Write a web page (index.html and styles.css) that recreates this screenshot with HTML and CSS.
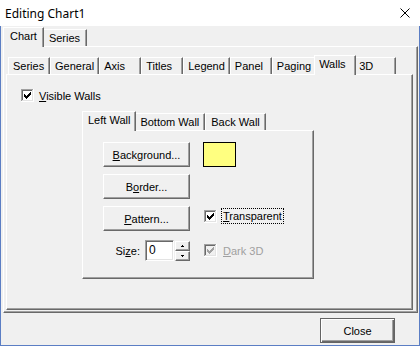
FILE: index.html
```html
<!DOCTYPE html>
<html lang="en">
<head>
    <meta charset="UTF-8">
    <title>Editing Chart1</title>
    <link rel="stylesheet" href="styles.css">
</head>
<body>
<div class="window">
    <div class="titlebar">
        <span class="title">Editing Chart1</span>
        <svg class="close-x" width="10" height="10" viewBox="0 0 10 10"><path d="M0.5 0.5L9.5 9.5M9.5 0.5L0.5 9.5" stroke="#000" stroke-width="1" fill="none"/></svg>
    </div>
    <div class="client">
        <div class="tabs outer">
            <div class="tab active">Chart</div>
            <div class="tab">Series</div>
        </div>
        <div class="page outer-page">
            <div class="tabs small">
                <div class="tab">Series</div>
                <div class="tab">General</div>
                <div class="tab">Axis</div>
                <div class="tab">Titles</div>
                <div class="tab">Legend</div>
                <div class="tab">Panel</div>
                <div class="tab">Paging</div>
                <div class="tab active">Walls</div>
                <div class="tab">3D</div>
            </div>
            <div class="page inner-page">
                <label class="check">
                    <svg class="cb" width="13" height="13" viewBox="0 0 13 13">
                        <path d="M0 0h12v1H1v11H0z" fill="#a0a0a0"/>
                        <path d="M1 1h10v1H2v9H1z" fill="#696969"/>
                        <path d="M12 0h1v13H0v-1h12z" fill="#fff"/>
                        <path d="M11 1h1v11H1v-1h10z" fill="#e3e3e3"/>
                        <rect x="2" y="2" width="9" height="9" fill="#fff"/>
                        <path d="M3 5h1v3H3zM4 6h1v3H4zM5 7h1v3H5zM6 6h1v3H6zM7 5h1v3H7zM8 4h1v3H8zM9 3h1v3H9z" fill="#000"/>
                    </svg>
                    <span class="check-text"><u>V</u>isible Walls</span>
                </label>

                <div class="walls">
                    <div class="tabs wall">
                        <div class="tab active">Left Wall</div>
                        <div class="tab">Bottom Wall</div>
                        <div class="tab">Back Wall</div>
                    </div>
                    <div class="page wall-page">
                        <div class="wall-grid">
                            <button class="btn"><u>B</u>ackground...</button>
                            <div class="swatch"></div>

                            <button class="btn">B<u>o</u>rder...</button>
                            <div></div>

                            <button class="btn"><u>P</u>attern...</button>
                            <label class="check transparent">
                                <svg class="cb" width="13" height="13" viewBox="0 0 13 13">
                                    <path d="M0 0h12v1H1v11H0z" fill="#a0a0a0"/>
                                    <path d="M1 1h10v1H2v9H1z" fill="#696969"/>
                                    <path d="M12 0h1v13H0v-1h12z" fill="#fff"/>
                                    <path d="M11 1h1v11H1v-1h10z" fill="#e3e3e3"/>
                                    <rect x="2" y="2" width="9" height="9" fill="#fff"/>
                                    <path d="M3 5h1v3H3zM4 6h1v3H4zM5 7h1v3H5zM6 6h1v3H6zM7 5h1v3H7zM8 4h1v3H8zM9 3h1v3H9z" fill="#000"/>
                                </svg>
                                <span class="focus"><u>T</u>ransparent</span>
                            </label>

                            <div class="size-row">
                                <span class="size-label">Si<u>z</u>e:</span>
                                <div class="edit">0</div>
                                <div class="spin">
                                    <div class="spin-btn"><svg width="3" height="2" viewBox="0 0 3 2"><path d="M1 0h1v1H1zM0 1h3v1H0z" fill="#000"/></svg></div>
                                    <div class="spin-btn"><svg width="3" height="2" viewBox="0 0 3 2"><path d="M0 0h3v1H0zM1 1h1v1H1z" fill="#000"/></svg></div>
                                </div>
                            </div>
                            <label class="check disabled">
                                <svg class="cb" width="13" height="13" viewBox="0 0 13 13">
                                    <path d="M0 0h12v1H1v11H0z" fill="#a0a0a0"/>
                                    <path d="M1 1h10v1H2v9H1z" fill="#696969"/>
                                    <path d="M12 0h1v13H0v-1h12z" fill="#fff"/>
                                    <path d="M11 1h1v11H1v-1h10z" fill="#e3e3e3"/>
                                    <rect x="2" y="2" width="9" height="9" fill="#f0f0f0"/>
                                    <path d="M3 5h1v3H3zM4 6h1v3H4zM5 7h1v3H5zM6 6h1v3H6zM7 5h1v3H7zM8 4h1v3H8zM9 3h1v3H9z" fill="#a0a0a0"/>
                                </svg>
                                <span class="check-text"><u>D</u>ark 3D</span>
                            </label>
                        </div>
                    </div>
                </div>
            </div>
        </div>
        <div class="footer">
            <button class="btn default">Close</button>
        </div>
    </div>
</div>
</body>
</html>
```

FILE: styles.css
```css
* {
    box-sizing: border-box;
}
body {
    margin: 0;
    font-family: "Liberation Sans", Arial, sans-serif;
    font-size: 11px;
    color: #000;
    background: #f0f0f0;
}
.window {
    width: 420px;
    height: 346px;
    display: flex;
    flex-direction: column;
    background: #f0f0f0;
}
.titlebar {
    height: 26px;
    flex: none;
    background: #fff;
    display: flex;
    align-items: center;
    justify-content: space-between;
    padding: 0 10px 0 5px;
    font-family: "Segoe UI", "Noto Sans", sans-serif;
    font-size: 12px;
}
.client {
    flex: 1;
    display: flex;
    flex-direction: column;
    border: 1px solid #5b7ec4;
    border-top: none;
    padding: 1px 1px 0 2px;
}

/* tab strips */
.tabs {
    display: flex;
    align-items: flex-end;
    height: 19px;
    padding-left: 2px;
    position: relative;
    z-index: 1;
    flex: none;
}
.tab {
    height: 17px;
    line-height: 16px;
    padding: 0 4px;
    border-top: 1px solid #fff;
    border-left: 1px solid #fff;
    border-right: 1px solid #696969;
    box-shadow: inset -1px 0 #a0a0a0;
    background: #f0f0f0;
    white-space: nowrap;
}
.tabs.outer .tab {
    padding: 0 6px;
}
.tabs.wall .tab {
    padding: 0 5px;
}
.tabs.small .tab {
    min-width: 42px;
}
.tab.active {
    height: 20px;
    padding-bottom: 3px;
    margin: 0 -2px -1px;
    position: relative;
    z-index: 1;
}

/* pages */
.page {
    border: 1px solid;
    border-color: #fff #696969 #696969 #fff;
    box-shadow: inset -1px -1px #a0a0a0;
}
.outer-page {
    height: 267px;
    flex: none;
    display: flex;
    flex-direction: column;
    padding: 8px 4px 2px 2px;
}
.inner-page {
    flex: 1;
    padding: 14px 0 0 14px;
}
.walls {
    width: 232px;
    margin: 9px 0 0 61px;
}
.wall-page {
    height: 149px;
    padding: 11px 0 0 20px;
}

/* checkboxes */
.check {
    display: flex;
    align-items: center;
    height: 13px;
}
.cb {
    display: block;
    flex: none;
}
.check-text {
    margin-left: 5px;
    white-space: nowrap;
}
.check.transparent {
    height: 16px;
    align-self: start;
    margin: 2px 0 0 1px;
}
.focus {
    margin-left: 4px;
    border: 1px dotted #000;
    padding: 0 1px;
    line-height: 14px;
    white-space: nowrap;
}
.check.disabled {
    margin-left: 1px;
    align-self: center;
    color: #a0a0a0;
}
.check.disabled .check-text {
    margin-left: 6px;
}

/* wall grid */
.wall-grid {
    display: grid;
    grid-template-columns: 87px auto;
    grid-template-rows: 25px 25px 25px 25px;
    column-gap: 13px;
    row-gap: 7px;
}
.btn {
    font: inherit;
    color: #000;
    background: #f0f0f0;
    border: 1px solid;
    border-color: #fff #696969 #696969 #fff;
    box-shadow: inset -1px -1px #a0a0a0;
    padding: 0;
    margin: 0;
    height: 25px;
    width: 87px;
}
.swatch {
    width: 33px;
    height: 25px;
    border: 1px solid #000;
    background: #ffff80;
}
.size-row {
    display: flex;
    justify-content: flex-end;
    align-items: center;
}
.size-label {
    margin-right: 5px;
}
.edit {
    width: 29px;
    height: 21px;
    background: #fff;
    border: 1px solid;
    border-color: #a0a0a0 #fff #fff #a0a0a0;
    box-shadow: inset 1px 1px #696969, inset -1px -1px #e3e3e3;
    font-size: 12px;
    line-height: 19px;
    padding-left: 3px;
    margin-right: 1px;
}
.spin {
    display: flex;
    flex-direction: column;
    width: 15px;
    height: 20px;
}
.spin-btn {
    height: 10px;
    display: flex;
    align-items: center;
    justify-content: center;
    border: 1px solid;
    border-color: #fff #696969 #696969 #fff;
    box-shadow: inset -1px -1px #a0a0a0;
}
.spin-btn svg {
    display: block;
}

/* bottom bar */
.footer {
    flex: 1;
    display: flex;
    justify-content: flex-end;
    padding: 5px 23px 0 0;
}
.btn.default {
    width: 75px;
    border: 1px solid #646464;
    box-shadow: inset 1px 1px #fff, inset -1px -1px #696969, inset -2px -2px #a0a0a0;
}
```
